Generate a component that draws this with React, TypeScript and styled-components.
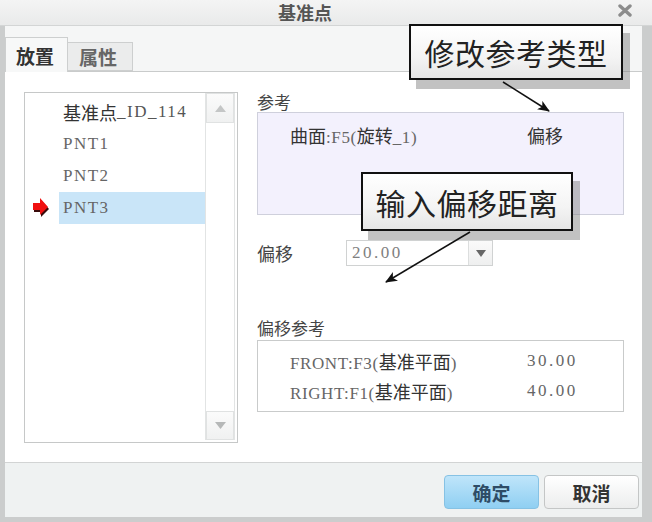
import React from "react";
import styled, { createGlobalStyle } from "styled-components";

const GlobalStyle = createGlobalStyle`
  html, body {
    margin: 0;
    padding: 0;
    background: #fff;
  }
  body {
    font-family: "Noto Sans CJK SC", "Liberation Sans", sans-serif;
  }
  * {
    box-sizing: border-box;
  }
`;

const Window = styled.div`
  position: relative;
  width: 652px;
  height: 522px;
  display: flex;
  flex-direction: column;
  background: #cbcdcd;
  overflow: hidden;
`;

const TitleBar = styled.div`
  flex: none;
  height: 26px;
  display: flex;
  align-items: center;
  padding: 0 20px 0 5px;
  background: linear-gradient(#f4f4f4, #e9eaea);
  border-bottom: 1px solid #d3d5d5;
`;

const TitleText = styled.div`
  flex: 1;
  text-align: center;
  padding-right: 12px;
  font-size: 18px;
  line-height: 25px;
  font-weight: bold;
  color: #555;
`;

const CloseButton = styled.div`
  width: 15px;
  height: 15px;
  margin-top: -4px;
  display: flex;
  align-items: center;
  justify-content: center;
`;

const Main = styled.div`
  flex: 1;
  display: flex;
  flex-direction: column;
  margin: 0 10px 5px 5px;
  background: #fff;
`;

const TabBar = styled.div`
  flex: none;
  height: 46px;
  display: flex;
  align-items: flex-end;
  background: #f5f6f6;
  border-bottom: 1px solid #c9cbcb;
`;

const Tab = styled.div<{ $active?: boolean }>`
  display: flex;
  align-items: center;
  height: ${(p) => (p.$active ? "35px" : "29px")};
  width: ${(p) => (p.$active ? "63px" : "65px")};
  margin-bottom: ${(p) => (p.$active ? "-1px" : "0")};
  padding-left: ${(p) => (p.$active ? "10px" : "11px")};
  background: ${(p) => (p.$active ? "#f7f8f8" : "#ebecec")};
  border: 1px solid #cdcfcf;
  border-bottom: ${(p) => (p.$active ? "none" : "1px solid #cdcfcf")};
  border-left: ${(p) => (p.$active ? "1px solid #cdcfcf" : "none")};
  font-size: 19px;
  font-weight: bold;
  color: ${(p) => (p.$active ? "#333" : "#666")};
`;

const Content = styled.div`
  flex: 1;
  display: flex;
  gap: 19px;
  padding: 20px 18px 0 19px;
`;

const ListBox = styled.div`
  width: 214px;
  height: 351px;
  display: flex;
  border: 1px solid #c6c8c8;
  padding: 0 2px 2px 0;
`;

const ListItems = styled.div`
  flex: 1;
  padding-top: 3px;
`;

const ListRow = styled.div`
  display: grid;
  grid-template-columns: 34px 1fr;
  height: 32px;
`;

const Marker = styled.div`
  display: flex;
  align-items: center;
  padding-left: 8px;
`;

const ItemLabel = styled.div<{ $selected?: boolean }>`
  display: flex;
  align-items: center;
  padding-left: 4px;
  background: ${(p) => (p.$selected ? "#c9e5f8" : "transparent")};
  font-size: 18px;
  color: #333;
  white-space: nowrap;
`;

const Latin = styled.span<{ $tone?: string; $spacing?: number }>`
  font-family: "Liberation Serif", "Noto Sans CJK SC", serif;
  font-size: 17px;
  letter-spacing: ${(p) => p.$spacing ?? 0.6}px;
  color: ${(p) => p.$tone || "#666"};
`;

const ScrollBar = styled.div`
  width: 30px;
  display: flex;
  flex-direction: column;
  border-left: 1px solid #e2e4e4;
  border-right: 1px solid #e2e4e4;
`;

const ScrollButton = styled.div<{ $h: number }>`
  height: ${(p) => p.$h}px;
  display: flex;
  align-items: center;
  justify-content: center;
  background: linear-gradient(#fbfbfb, #f0f1f1);
  border: 1px solid #e0e2e2;
`;

const ScrollTrack = styled.div`
  flex: 1;
`;

const RightColumn = styled.div`
  width: 367px;
  display: flex;
  flex-direction: column;
`;

const SectionLabel = styled.div<{ $gap?: number }>`
  margin-top: ${(p) => p.$gap || 0}px;
  font-size: 17px;
  line-height: 20px;
  color: #444;
`;

const RefBox = styled.div`
  height: 103px;
  padding: 9px 0 0 32px;
  background: #f3f1fd;
  border: 1px solid #cfd0dc;
`;

const RefRow = styled.div`
  display: grid;
  grid-template-columns: 237px 1fr;
  height: 22px;
  align-items: center;
  font-size: 18px;
  color: #333;
  white-space: nowrap;
`;

const OffsetRow = styled.div`
  display: flex;
  align-items: center;
  margin-top: 25px;
  height: 26px;
`;

const OffsetLabel = styled.div`
  width: 89px;
  font-size: 18px;
  color: #444;
`;

const Dropdown = styled.div`
  width: 147px;
  height: 26px;
  display: flex;
  border: 1px solid #d0d2d2;
  background: #fff;
`;

const DropdownValue = styled.div`
  flex: 1;
  display: flex;
  align-items: center;
  padding-left: 5px;
`;

const DropdownArrow = styled.div`
  width: 24px;
  display: flex;
  align-items: center;
  justify-content: center;
  border-left: 1px solid #dcdede;
  background: linear-gradient(#fafafa, #eeefef);
`;

const OffsetRefBox = styled.div`
  height: 72px;
  margin-top: 2px;
  padding: 5px 0 0 32px;
  border: 1px solid #c9cbcb;
`;

const OffsetRefRow = styled.div`
  display: grid;
  grid-template-columns: 237px 1fr;
  height: 30px;
  align-items: center;
  font-size: 18px;
  color: #333;
  white-space: nowrap;
`;

const Footer = styled.div`
  flex: none;
  height: 55px;
  display: flex;
  justify-content: flex-end;
  align-items: flex-start;
  gap: 5px;
  padding: 12px 3px 0 0;
  background: #eff2f2;
  border-top: 1px solid #d2d4d4;
`;

const DialogButton = styled.button<{ $primary?: boolean }>`
  width: 95px;
  height: 34px;
  border-radius: 4px;
  font-family: "Noto Sans CJK SC", sans-serif;
  font-size: 19px;
  font-weight: bold;
  color: ${(p) => (p.$primary ? "#2e4c66" : "#333")};
  background: ${(p) =>
    p.$primary
      ? "linear-gradient(#bfe5fa, #8fcff2)"
      : "linear-gradient(#ffffff, #eceded)"};
  border: 1px solid ${(p) => (p.$primary ? "#86c2e4" : "#c4c6c6")};
  padding: 0;
`;

const Callout = styled.div<{ $x: number; $y: number; $w: number; $h: number }>`
  position: absolute;
  left: ${(p) => p.$x}px;
  top: ${(p) => p.$y}px;
  width: ${(p) => p.$w}px;
  height: ${(p) => p.$h}px;
  display: flex;
  align-items: center;
  justify-content: center;
  border: 2.5px solid #111;
  background: linear-gradient(#ffffff, #f4f4f4 60%, #e6e6e6);
  box-shadow: 7px 9px 0 rgba(120, 120, 120, 0.45);
  font-size: 30px;
  color: #222;
  letter-spacing: 0.5px;
`;

const Overlay = styled.svg`
  position: absolute;
  left: 0;
  top: 0;
  pointer-events: none;
`;

const RedMarker = () => (
  <svg width="17" height="20" viewBox="0 0 17 20">
    <path d="M1 7 H8 V2 L16 11 L8 19 V14 H1 Z" fill="#3a0a0a" />
    <path d="M0 5 H7 V0 L15 9 L7 17 V12 H0 Z" fill="#f01010" />
  </svg>
);

const items = [
  { id: "a", cjk: "基准点", latin: "_ID_114", tone: "#555" },
  { id: "b", cjk: "", latin: "PNT1" },
  { id: "c", cjk: "", latin: "PNT2" },
  { id: "d", cjk: "", latin: "PNT3", selected: true },
];

const offsetRefs = [
  { name: "FRONT:F3", value: "30.00" },
  { name: "RIGHT:F1", value: "40.00" },
];

export default function App() {
  return (
    <>
      <GlobalStyle />
      <Window>
        <TitleBar>
          <TitleText>基准点</TitleText>
          <CloseButton>
            <svg width="14" height="13" viewBox="0 0 14 13">
              <path d="M2 2 L12 11 M12 2 L2 11" stroke="#8c8c8c" strokeWidth="3.4" strokeLinecap="round" />
            </svg>
          </CloseButton>
        </TitleBar>
        <Main>
          <TabBar>
            <Tab $active>放置</Tab>
            <Tab>属性</Tab>
          </TabBar>
          <Content>
            <ListBox>
              <ListItems>
                {items.map((it) => (
                  <ListRow key={it.id}>
                    <Marker>{it.selected && <RedMarker />}</Marker>
                    <ItemLabel $selected={it.selected}>
                      {it.cjk}
                      <Latin $tone={it.tone} $spacing={1.5}>{it.latin}</Latin>
                    </ItemLabel>
                  </ListRow>
                ))}
              </ListItems>
              <ScrollBar>
                <ScrollButton $h={30}>
                  <svg width="11" height="7" viewBox="0 0 11 7">
                    <path d="M5.5 0 L11 7 H0 Z" fill="#c4c6c6" />
                  </svg>
                </ScrollButton>
                <ScrollTrack />
                <ScrollButton $h={29}>
                  <svg width="11" height="7" viewBox="0 0 11 7">
                    <path d="M0 0 H11 L5.5 7 Z" fill="#b6b8b8" />
                  </svg>
                </ScrollButton>
              </ScrollBar>
            </ListBox>
            <RightColumn>
              <SectionLabel>参考</SectionLabel>
              <RefBox>
                <RefRow>
                  <span>
                    曲面<Latin>:F5(</Latin>旋转<Latin>_1)</Latin>
                  </span>
                  <span>偏移</span>
                </RefRow>
              </RefBox>
              <OffsetRow>
                <OffsetLabel>偏移</OffsetLabel>
                <Dropdown>
                  <DropdownValue>
                    <Latin $tone="#808080" $spacing={2.5}>20.00</Latin>
                  </DropdownValue>
                  <DropdownArrow>
                    <svg width="10" height="7" viewBox="0 0 10 7">
                      <path d="M0 0 H10 L5 7 Z" fill="#666" />
                    </svg>
                  </DropdownArrow>
                </Dropdown>
              </OffsetRow>
              <SectionLabel $gap={52}>偏移参考</SectionLabel>
              <OffsetRefBox>
                {offsetRefs.map((r) => (
                  <OffsetRefRow key={r.name}>
                    <span>
                      <Latin>{r.name}(</Latin>基准平面<Latin>)</Latin>
                    </span>
                    <Latin $spacing={2.5}>{r.value}</Latin>
                  </OffsetRefRow>
                ))}
              </OffsetRefBox>
            </RightColumn>
          </Content>
          <Footer>
            <DialogButton $primary>确定</DialogButton>
            <DialogButton>取消</DialogButton>
          </Footer>
        </Main>

        <Callout $x={409} $y={24} $w={214} $h={56}>修改参考类型</Callout>
        <Callout $x={361} $y={172} $w={212} $h={59}>输入偏移距离</Callout>

        <Overlay width="652" height="522" viewBox="0 0 652 522">
          <defs>
            <marker id="head" markerWidth="12" markerHeight="10" refX="11" refY="5" orient="auto" markerUnits="userSpaceOnUse">
              <path d="M0 0 L12 5 L0 10 L3 5 Z" fill="#111" />
            </marker>
          </defs>
          <line x1="503" y1="82" x2="549" y2="111" stroke="#111" strokeWidth="1.6" markerEnd="url(#head)" />
          <line x1="470" y1="232" x2="386" y2="282" stroke="#111" strokeWidth="1.6" markerEnd="url(#head)" />
        </Overlay>
      </Window>
    </>
  );
}
